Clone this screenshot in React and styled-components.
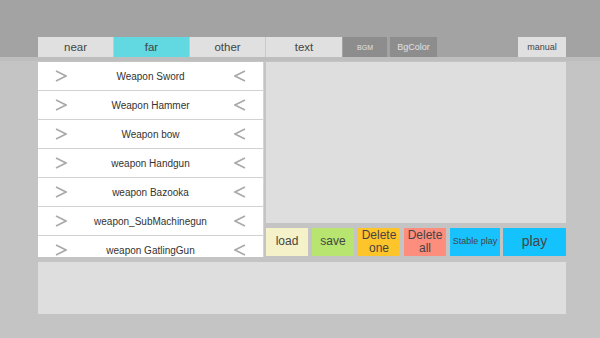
import React from 'react';
import styled, { createGlobalStyle } from 'styled-components';

const tabs = [
  { label: 'near' },
  { label: 'far', active: true },
  { label: 'other' },
  { label: 'text' },
];

const weapons = [
  'Weapon Sword',
  'Weapon Hammer',
  'Weapon bow',
  'weapon Handgun',
  'weapon Bazooka',
  'weapon_SubMachinegun',
  'weapon GatlingGun',
];

const actions = [
  { label: 'load', bg: '#f5f2c9', w: 42, size: 12 },
  { label: 'save', bg: '#b8e56f', w: 42, size: 12 },
  { label: 'Delete\none', bg: '#fec52b', w: 42, size: 12 },
  { label: 'Delete\nall', bg: '#fd8d7d', w: 42, size: 12 },
  { label: 'Stable play', bg: '#18c2fe', w: 50, size: 9 },
  { label: 'play', bg: '#14c3fe', w: 63, size: 14 },
];

function Chevron({ dir }) {
  const d = dir === 'right' ? 'M1 1 L11 6 L1 11' : 'M11 1 L1 6 L11 11';
  return (
    <svg width="12" height="12" viewBox="0 0 12 12">
      <path d={d} fill="none" stroke="#a9a9a9" strokeWidth="1.6" />
    </svg>
  );
}

export default function App() {
  return (
    <>
      <GlobalStyle />
      <Screen>
        <Header>
          <TabRow>
            {tabs.map((t) => (
              <Tab key={t.label} $active={t.active}>{t.label}</Tab>
            ))}
          </TabRow>
          <DarkButton $w={44} $size={7}>BGM</DarkButton>
          <DarkButton $w={47} $size={9}>BgColor</DarkButton>
          <Spacer />
          <ManualButton>manual</ManualButton>
        </Header>
        <Body>
          <Main>
            <List>
              {weapons.map((w) => (
                <Row key={w}>
                  <Chevron dir="right" />
                  <RowLabel>{w}</RowLabel>
                  <Chevron dir="left" />
                </Row>
              ))}
            </List>
            <RightColumn>
              <Preview />
              <ActionRow>
                {actions.map((a) => (
                  <ActionButton key={a.label} $bg={a.bg} $w={a.w} $size={a.size}>
                    {a.label}
                  </ActionButton>
                ))}
              </ActionRow>
            </RightColumn>
          </Main>
          <BottomPanel />
        </Body>
      </Screen>
    </>
  );
}

const GlobalStyle = createGlobalStyle`
  body {
    margin: 0;
    font-family: "Liberation Sans", Arial, sans-serif;
    background: #c4c4c4;
  }
`
const Screen = styled.div`
  width: 600px;
  height: 338px;
  background: #c4c4c4;
  overflow: hidden;
`
const Header = styled.div`
  padding: 37px 34px 0 38px;
  background: #a3a3a3;
  display: flex;
  align-items: flex-end;
  border-bottom: 4px solid #bebebe;
`
const TabRow = styled.div`
  display: flex;
  margin-right: 1px;
`
const Tab = styled.div`
  width: 76px;
  height: 20px;
  box-sizing: border-box;
  border-right: 1px solid #c8c8c8;
  background: ${(p) => (p.$active ? '#62d9e0' : '#e0e0e0')};
  color: #444;
  font-size: 11.5px;
  display: flex;
  align-items: center;
  justify-content: center;
  &:last-child {
    border-right: none;
  }
`
const DarkButton = styled.div`
  width: ${(p) => p.$w}px;
  height: 20px;
  margin-right: 3px;
  background: #8d8d8d;
  color: #e2e2e2;
  font-size: ${(p) => p.$size}px;
  display: flex;
  align-items: center;
  justify-content: center;
`
const Spacer = styled.div`
  flex: 1;
`
const ManualButton = styled.div`
  width: 48px;
  height: 20px;
  background: #e0e0e0;
  color: #444;
  font-size: 9px;
  display: flex;
  align-items: center;
  justify-content: center;
`
const Body = styled.div`
  padding: 1px 34px 0 38px;
  display: flex;
  flex-direction: column;
  gap: 5px;
`
const Main = styled.div`
  display: grid;
  grid-template-columns: 226px 300px;
  gap: 2px;
  height: 195px;
`
const List = styled.div`
  background: #fff;
  overflow: hidden;
  border-right: 1px solid #d4d4d4;
`
const Row = styled.div`
  height: 29px;
  box-sizing: border-box;
  border-bottom: 1px solid #d2d2d2;
  display: flex;
  align-items: center;
  padding: 0 17px;
`
const RowLabel = styled.div`
  flex: 1;
  text-align: center;
  font-size: 10px;
  color: #333;
`
const RightColumn = styled.div`
  display: flex;
  flex-direction: column;
  gap: 5px;
`
const Preview = styled.div`
  height: 161px;
  background: #dedede;
`
const ActionRow = styled.div`
  display: flex;
  gap: 4px;
  height: 28px;
`
const ActionButton = styled.div`
  width: ${(p) => p.$w}px;
  background: ${(p) => p.$bg};
  color: #444;
  font-size: ${(p) => p.$size}px;
  line-height: 13.5px;
  white-space: pre-line;
  text-align: center;
  display: flex;
  align-items: center;
  justify-content: center;
  &:last-child {
    margin-left: -1px;
  }
`
const BottomPanel = styled.div`
  height: 52px;
  background: #dedede;
`
